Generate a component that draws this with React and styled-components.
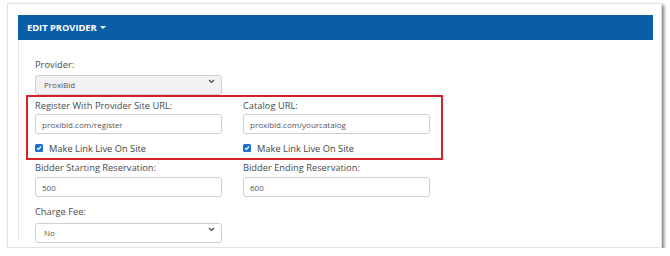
import React from "react";
import styled, { createGlobalStyle } from "styled-components";

const GlobalStyle = createGlobalStyle`
    html, body {
        margin: 0;
        padding: 0;
        background: #ffffff;
    }
    body {
        font-family: "Open Sans", "Noto Sans", sans-serif;
    }
`;

const Page = styled.div`
    padding: 3px 0 0 7px;
`;

const Card = styled.div`
    box-sizing: border-box;
    width: 655px;
    padding: 11px 8px 7px 10px;
    background: #ffffff;
    border: 1px solid #e2e2e2;
    box-shadow: 2px 2px 3px rgba(0, 0, 0, 0.5);
`;

const Header = styled.div`
    display: flex;
    align-items: center;
    gap: 3px;
    height: 25px;
    padding-left: 9px;
    background: #0a5ea8;
    color: #ffffff;
    font-size: 9.3px;
    font-weight: 700;
`;

const Caret = styled.span`
    width: 0;
    height: 0;
    border-left: 3px solid transparent;
    border-right: 3px solid transparent;
    border-top: 3px solid #ffffff;
    margin-top: -1px;
`;

const Body = styled.div`
    padding: 18px 0 1px 7px;
    border-left: 1px solid #e8e8e8;
`;

const Row = styled.div`
    display: grid;
    grid-template-columns: 187px 187px;
    column-gap: 21px;
    padding-left: 9px;
    margin-top: ${p => p.$top || 0}px;
`;

const Highlight = styled.div`
    display: grid;
    grid-template-columns: 187px 187px;
    column-gap: 21px;
    width: 417px;
    box-sizing: border-box;
    margin-top: 4px;
    padding: 2px 0 3px 7px;
    border: 2px solid #d8202a;
`;

const Field = styled.div`
    display: flex;
    flex-direction: column;
`;

const Label = styled.label`
    font-size: 9.3px;
    line-height: 13px;
    color: #4a4a4a;
    margin-bottom: ${p => p.$gap ?? 2}px;
`;

const Input = styled.input`
    box-sizing: border-box;
    width: 187px;
    height: 20px;
    padding: 0 6px;
    border: 1px solid #cfcfcf;
    border-radius: 3px;
    background: #ffffff;
    font-family: inherit;
    font-size: 8px;
    color: #555555;
    outline: none;
`;

const SelectWrap = styled.div`
    position: relative;
    width: 187px;
    height: 20px;
`;

const Select = styled.select`
    appearance: none;
    box-sizing: border-box;
    width: 100%;
    height: 100%;
    padding: 0 8px;
    border: 1px solid #cfcfcf;
    border-radius: 3px;
    background: ${p => (p.$muted ? "#f2f2f2" : "#ffffff")};
    font-family: inherit;
    font-size: 8px;
    color: #555555;
    outline: none;
`;

const Chevron = styled.svg`
    position: absolute;
    right: 7px;
    top: 8px;
    pointer-events: none;
`;

const CheckRow = styled.div`
    display: flex;
    align-items: center;
    gap: 6px;
    height: 14px;
    margin-top: 7px;
    font-size: 9.3px;
    color: #444444;
`;

const Box = styled.span`
    display: flex;
    align-items: center;
    justify-content: center;
    width: 8px;
    height: 8px;
    border-radius: 1.5px;
    background: #1b6fd8;
`;

const Dropdown = ({ value, muted }) => (
    <SelectWrap>
        <Select $muted={muted} defaultValue={value}>
            <option>{value}</option>
        </Select>
        <Chevron width="7" height="5" viewBox="0 0 7 5">
            <path d="M1 1 L3.5 3.5 L6 1" fill="none" stroke="#444" strokeWidth="1.2" />
        </Chevron>
    </SelectWrap>
);

const LiveCheck = () => (
    <CheckRow>
        <Box>
            <svg width="6" height="6" viewBox="0 0 6 6">
                <path d="M1 3.1 L2.5 4.5 L5 1.5" fill="none" stroke="#fff" strokeWidth="1.2" />
            </svg>
        </Box>
        Make Link Live On Site
    </CheckRow>
);

const App = () => {
    return (
        <Page>
            <GlobalStyle />
            <Card>
                <Header>
                    EDIT PROVIDER <Caret />
                </Header>
                <Body>
                    <Row>
                        <Field>
                            <Label $gap={0}>Provider:</Label>
                            <Dropdown value="ProxiBid" muted />
                        </Field>
                    </Row>
                    <Highlight>
                        <Field>
                            <Label>Register With Provider Site URL:</Label>
                            <Input defaultValue="proxibid.com/register" />
                            <LiveCheck />
                        </Field>
                        <Field>
                            <Label>Catalog URL:</Label>
                            <Input defaultValue="proxibid.com/yourcatalog" />
                            <LiveCheck />
                        </Field>
                    </Highlight>
                    <Row $top={1}>
                        <Field>
                            <Label $gap={3}>Bidder Starting Reservation:</Label>
                            <Input defaultValue="500" />
                        </Field>
                        <Field>
                            <Label $gap={3}>Bidder Ending Reservation:</Label>
                            <Input defaultValue="600" />
                        </Field>
                    </Row>
                    <Row $top={8}>
                        <Field>
                            <Label $gap={1}>Charge Fee:</Label>
                            <Dropdown value="No" />
                        </Field>
                    </Row>
                </Body>
            </Card>
        </Page>
    );
};

export default App;
